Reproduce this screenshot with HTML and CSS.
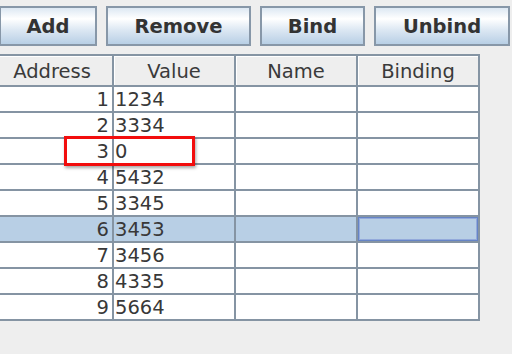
FILE: index.html
```html
<!DOCTYPE html>
<html>

<head>
  <title>Memory bindings</title>
  <link rel="stylesheet" href="styles.css">
</head>

<body>

  <div class="toolbar">
    <button class="btn btn-add">Add</button>
    <button class="btn btn-remove">Remove</button>
    <button class="btn btn-bind">Bind</button>
    <button class="btn btn-unbind">Unbind</button>
  </div>

  <div class="grid">
    <div class="head">Address</div>
    <div class="head">Value</div>
    <div class="head">Name</div>
    <div class="head">Binding</div>

    <div class="cell addr">1</div><div class="cell">1234</div><div class="cell"></div><div class="cell"></div>
    <div class="cell addr">2</div><div class="cell">3334</div><div class="cell"></div><div class="cell"></div>
    <div class="cell addr">3</div><div class="cell">0</div><div class="cell"></div><div class="cell"></div>
    <div class="cell addr">4</div><div class="cell">5432</div><div class="cell"></div><div class="cell"></div>
    <div class="cell addr">5</div><div class="cell">3345</div><div class="cell"></div><div class="cell"></div>
    <div class="cell addr sel">6</div><div class="cell sel">3453</div><div class="cell sel"></div><div class="cell sel focus"></div>
    <div class="cell addr">7</div><div class="cell">3456</div><div class="cell"></div><div class="cell"></div>
    <div class="cell addr">8</div><div class="cell">4335</div><div class="cell"></div><div class="cell"></div>
    <div class="cell addr">9</div><div class="cell">5664</div><div class="cell"></div><div class="cell"></div>
  </div>

  <div class="mark"></div>

</body>

</html>
```

FILE: styles.css
```css
html,
body {
  margin: 0;
  height: 100%;
  background-color: #eeeeee;
  overflow: hidden;
}

body {
  position: relative;
  font-family: "DejaVu Sans", sans-serif;
  font-size: 19.5px;
  color: #383838;
}

.toolbar {
  display: flex;
  gap: 9px;
  padding-top: 6px;
  margin-left: -1px;
}

.btn {
  height: 40px;
  padding: 0;
  border: 2px solid #8797a8;
  background: linear-gradient(#dde8f3 0%, #ffffff 30%, #dde8f3 60%, #b8cfe5 100%);
  font-family: "DejaVu Sans", sans-serif;
  font-size: 19.5px;
  font-weight: bold;
  color: #333;
  flex: none;
}

.btn-add {
  width: 98px;
}

.btn-remove {
  width: 145px;
}

.btn-bind {
  width: 105px;
}

.btn-unbind {
  width: 136px;
}

.grid {
  display: grid;
  grid-template-columns: repeat(4, 120px);
  grid-template-rows: 29px repeat(9, 24px);
  gap: 2px;
  width: max-content;
  margin-top: 8px;
  margin-left: -10px;
  border: 2px solid #8594a3;
  background-color: #8594a3;
}

.head {
  background-color: #eeeeee;
  box-shadow: inset 1px 1px #ffffff;
  text-align: center;
  line-height: 32px;
  height: 29px;
  overflow: hidden;
  color: #3a3a3a;
}

.cell {
  background-color: #ffffff;
  line-height: 26px;
  height: 24px;
  overflow: hidden;
  padding: 0 1px;
  white-space: nowrap;
}

.addr {
  text-align: right;
  padding-right: 3px;
}

.sel {
  background-color: #b8cfe5;
}

.focus {
  box-shadow: inset 0 0 0 1px #6584c6, inset 0 0 0 2px #93aadb;
}

.mark {
  position: absolute;
  left: 64px;
  top: 136px;
  width: 125px;
  height: 24px;
  border: 3px solid #f20d0d;
  box-shadow: 1px 2px 3px rgba(0, 0, 0, 0.35);
}
```
